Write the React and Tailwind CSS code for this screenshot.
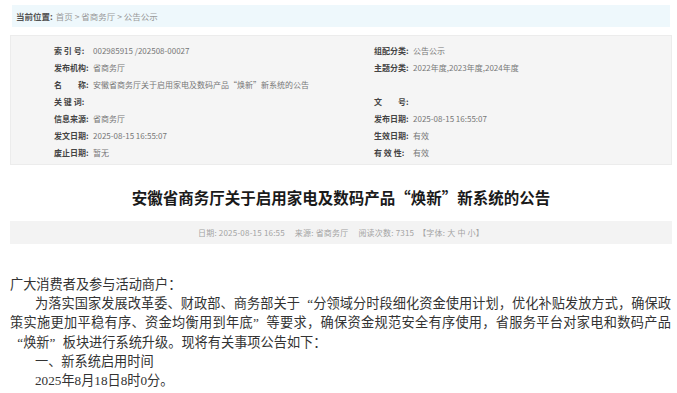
import React from 'react';

const metaLeft = [
  ['索 引 号', '002985915 /202508-00027'],
  ['发布机构', '省商务厅'],
  ['名　　称', '安徽省商务厅关于启用家电及数码产品“焕新”新系统的公告'],
  ['关 键 词', ''],
  ['信息来源', '省商务厅'],
  ['发文日期', '2025-08-15 16:55:07'],
  ['废止日期', '暂无'],
];

const metaRight = [
  ['组配分类', '公告公示'],
  ['主题分类', '2022年度,2023年度,2024年度'],
  null,
  ['文　　号', ''],
  ['发布日期', '2025-08-15 16:55:07'],
  ['生效日期', '有效'],
  ['有 效 性', '有效'],
];

const MetaRow = ({ row }) => {
  if (!row) return <div className="h-[17px]" />;
  return (
    <div className="h-[17px] flex items-center whitespace-nowrap">
      <span className="w-[39px] font-bold text-[#444]">{row[0]}:</span>
      <span className="text-[#777]">{row[1]}</span>
    </div>
  );
};

// full-width curly quotes, like the SimSun body text in the source page
const LQ = () => <span className="inline-block w-[1em] indent-0 text-right">“</span>;
const RQ = () => <span className="inline-block w-[1em] indent-0 text-left">”</span>;

const App = () => {
  return (
    <div className="w-[677px] h-[393px] overflow-hidden bg-white pl-[10px] pr-[5px] pt-[5px] font-['Noto_Sans_CJK_SC',sans-serif]">
      {/* breadcrumb */}
      <div className="ml-[2px] mr-[2px] h-[22px] bg-[#eef8fc] flex items-center pl-[4px] text-[8.5px] text-[#999]">
        <span className="font-bold text-[#555]">当前位置:</span>
        <span className="ml-[3px]">首页 &gt; 省商务厅 &gt; 公告公示</span>
      </div>

      {/* meta info */}
      <div className="mt-[8px] h-[130px] bg-[#f5f5f5] border border-[#ececec] pt-[6px] text-[8px] flex">
        <div className="w-[319px] pl-[43px]">
          {metaLeft.map((r, i) => (
            <MetaRow key={i} row={r} />
          ))}
        </div>
        <div className="flex-1 pl-[44px]">
          {metaRight.map((r, i) => (
            <MetaRow key={i} row={r} />
          ))}
        </div>
      </div>

      {/* title */}
      <h1 className="mt-[20px] h-[24px] leading-[24px] text-center text-[15.5px] font-bold text-[#1a1a1a]">
        安徽省商务厅关于启用家电及数码产品“焕新”新系统的公告
      </h1>

      {/* info bar */}
      <div className="mt-[12px] h-[23px] bg-[#f3f3f3] flex items-center justify-center text-[8px] text-[#a3a3a3] whitespace-pre tracking-[0.2px]">
        日期: 2025-08-15 16:55     来源: 省商务厅     阅读次数: 7315  【字体: 大 中 小】
      </div>

      {/* body */}
      <div className="mt-[31px] w-[661px] text-[13.2px] leading-[19.2px] text-[#333] font-['Liberation_Serif','Noto_Sans_CJK_SC',serif]">
        <p>广大消费者及参与活动商户：</p>
        <p className="indent-[25px] text-justify">
          为落实国家发展改革委、财政部、商务部关于<span className="whitespace-nowrap"><LQ />分</span>领域分时段细化资金使用计划，优化补贴发放方式，确保政策实施更加平稳有序、资金均衡用到<span className="whitespace-nowrap">年底<RQ /></span>等要求，确保资金规范安全有序使用，省服务平台对家电和数码产品<span className="whitespace-nowrap"><LQ />焕新<RQ /></span>板块进行系统升级。现将有关事项公告如下：
        </p>
        <p className="pl-[25px]">一、新系统启用时间</p>
        <p className="pl-[25px]">2025年8月18日8时0分。</p>
      </div>
    </div>
  );
};

export default App;
